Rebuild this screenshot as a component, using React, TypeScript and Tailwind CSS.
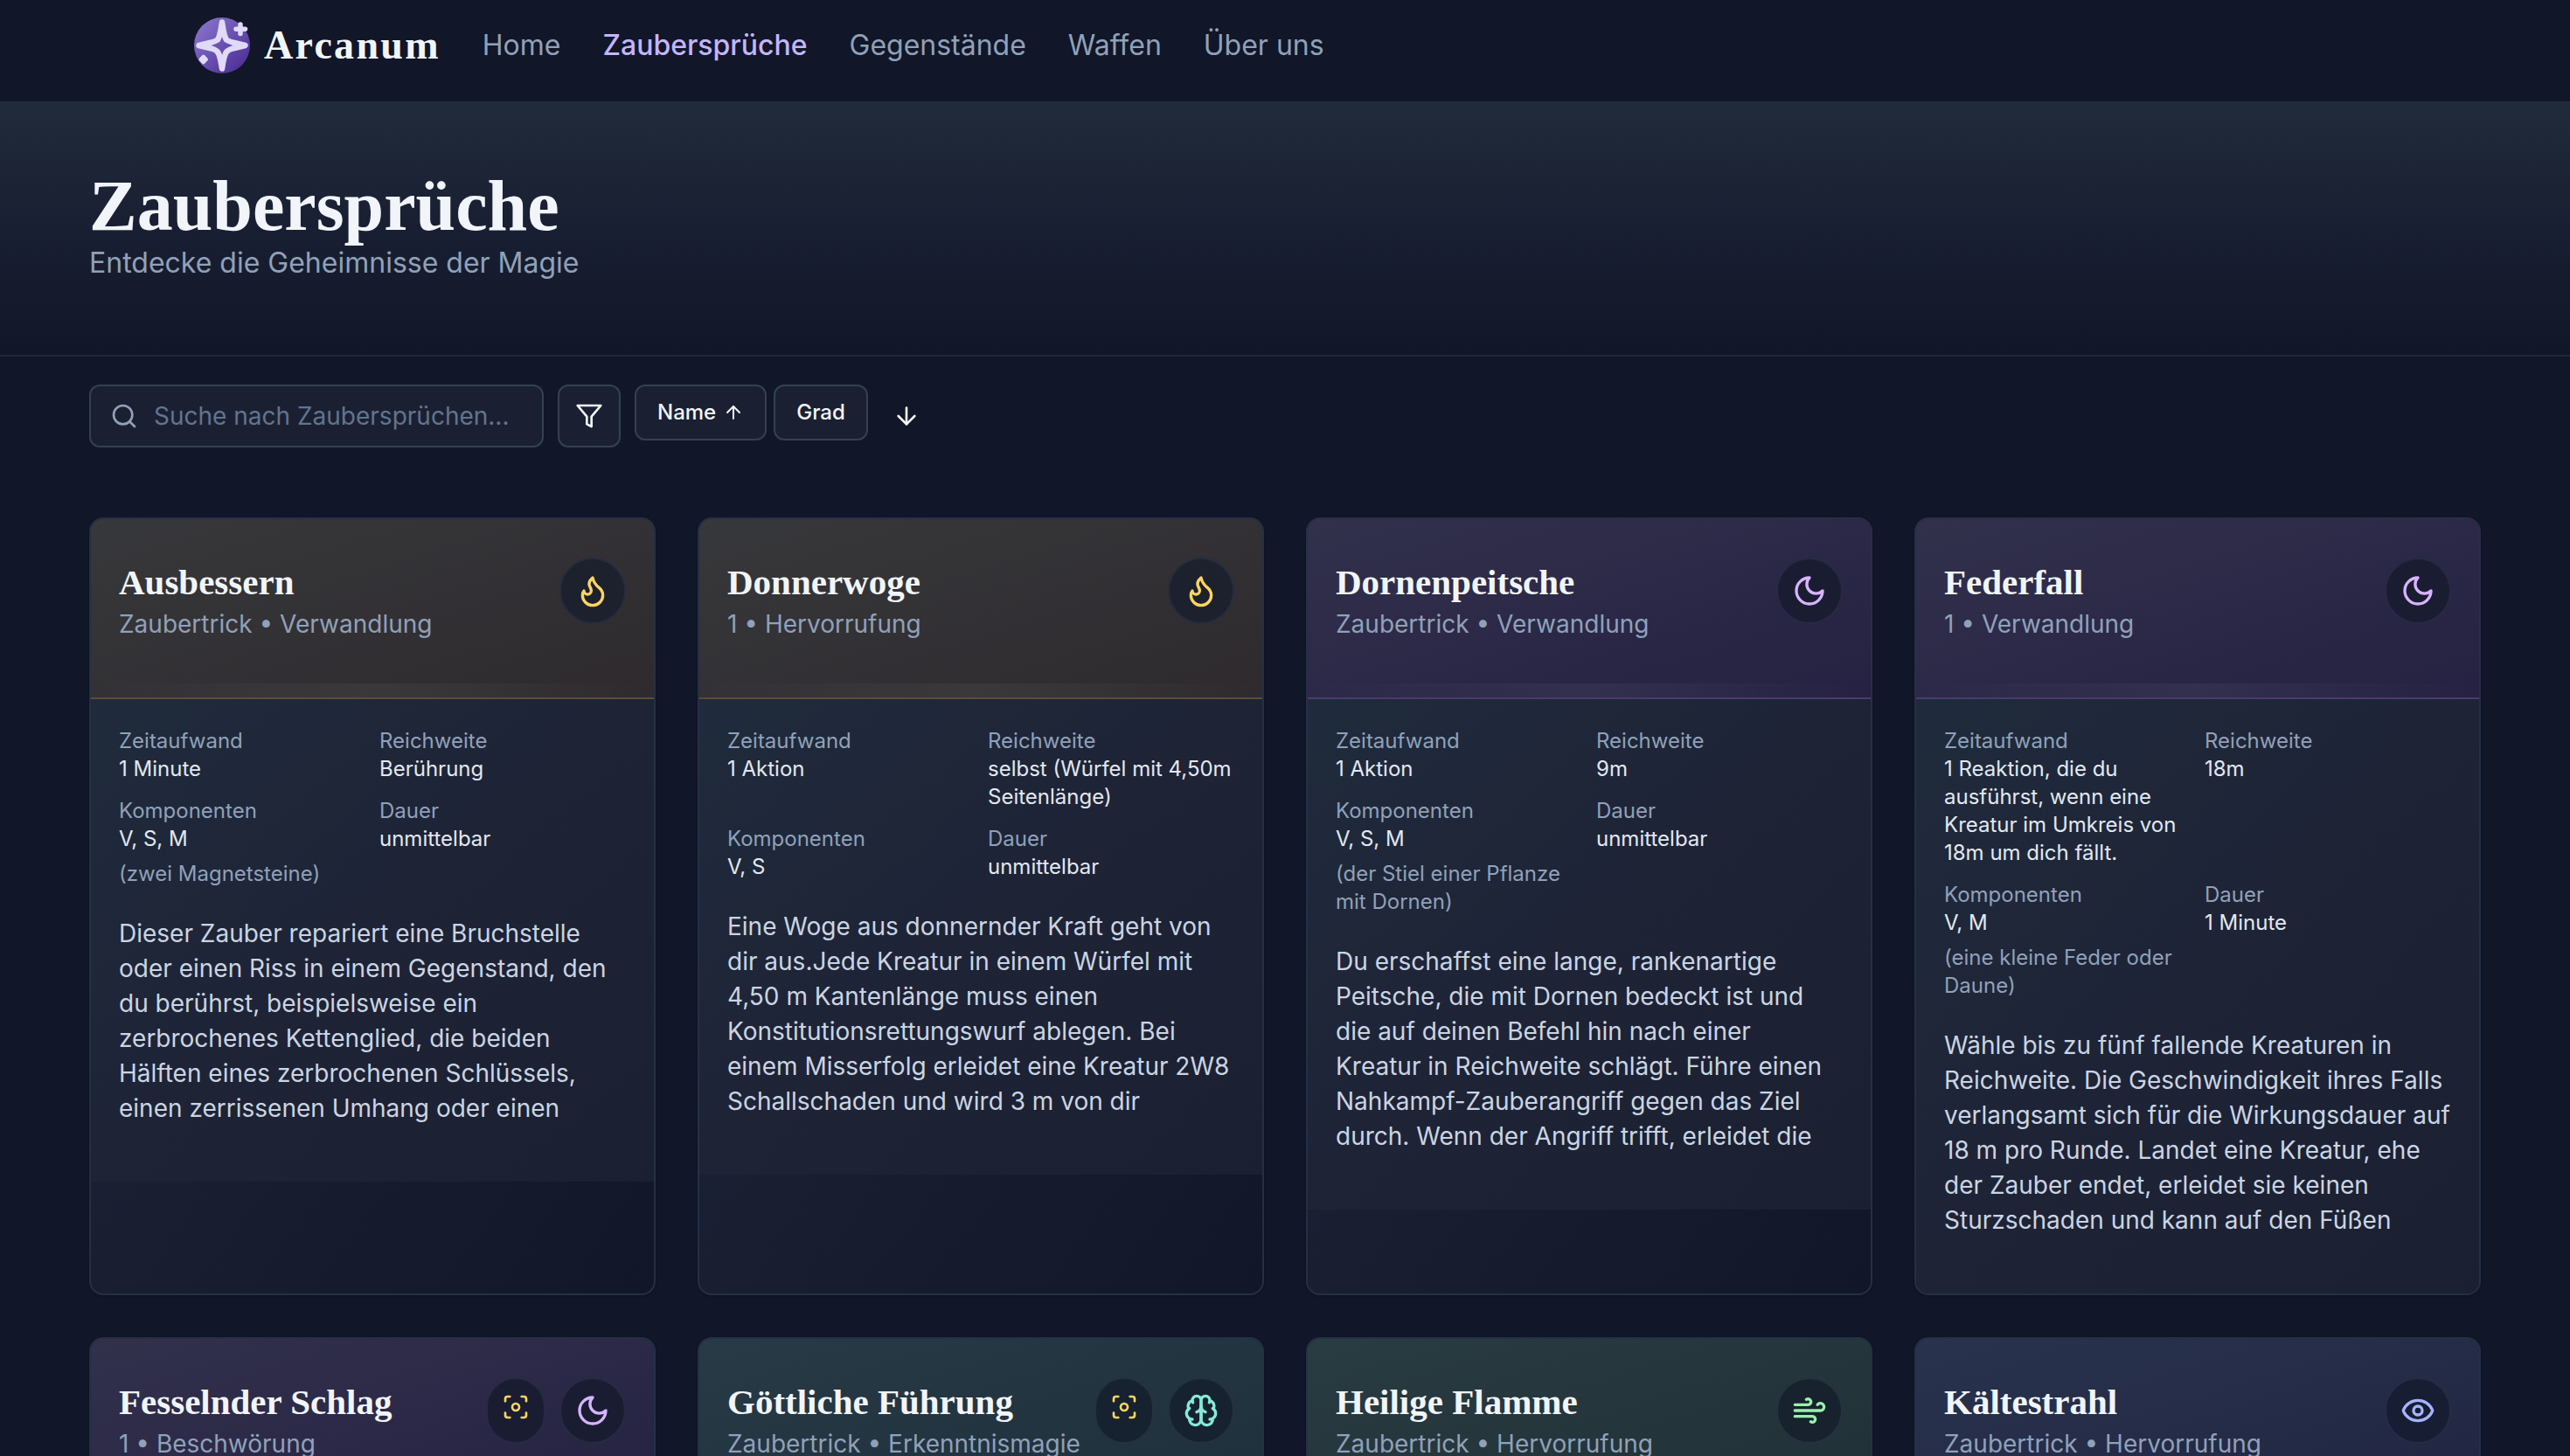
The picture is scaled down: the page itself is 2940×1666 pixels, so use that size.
import type { ReactNode } from "react";

const serif = "font-['Liberation_Serif',serif] font-bold text-slate-100";

function Glyph({ children, className }: { children: ReactNode; className: string }) {
  return (
    <svg
      viewBox="0 0 24 24"
      fill="none"
      stroke="currentColor"
      strokeWidth={2}
      strokeLinecap="round"
      strokeLinejoin="round"
      aria-hidden="true"
      className={"shrink-0 " + className}
    >
      {children}
    </svg>
  );
}

const glyphs = {
  flame: (
    <path d="M8.5 14.5A2.5 2.5 0 0 0 11 12c0-1.38-.5-2-1-3-1.072-2.143-.224-4.054 2-6 .5 2.5 2 4.9 4 6.5 2 1.6 3 3.5 3 5.5a7 7 0 1 1-14 0c0-1.153.433-2.294 1-3a2.5 2.5 0 0 0 2.5 2.5z" />
  ),
  moon: <path d="M12 3a6 6 0 0 0 9 9 9 9 0 1 1-9-9Z" />,
  brain: (
    <>
      <path d="M12 5a3 3 0 1 0-5.997.125 4 4 0 0 0-2.526 5.77 4 4 0 0 0 .556 6.588A4 4 0 1 0 12 18Z" />
      <path d="M12 5a3 3 0 1 1 5.997.125 4 4 0 0 1 2.526 5.77 4 4 0 0 1-.556 6.588A4 4 0 1 1 12 18Z" />
      <path d="M15 13a4.5 4.5 0 0 1-3-4 4.5 4.5 0 0 1-3 4" />
      <path d="M17.599 6.5a3 3 0 0 0 .399-1.375" />
      <path d="M6.003 5.125A3 3 0 0 0 6.401 6.5" />
      <path d="M3.477 10.896a4 4 0 0 1 .585-.396" />
      <path d="M19.938 10.5a4 4 0 0 1 .585.396" />
      <path d="M6 18a4 4 0 0 1-1.967-.516" />
      <path d="M19.967 17.484A4 4 0 0 1 18 18" />
    </>
  ),
  wind: (
    <>
      <path d="M12.8 19.6A2 2 0 1 0 14 16H2" />
      <path d="M17.5 8a2.5 2.5 0 1 1 2 4H2" />
      <path d="M9.8 4.4A2 2 0 1 1 11 8H2" />
    </>
  ),
  eye: (
    <>
      <path d="M2.062 12.348a1 1 0 0 1 0-.696 10.75 10.75 0 0 1 19.876 0 1 1 0 0 1 0 .696 10.75 10.75 0 0 1-19.876 0" />
      <circle cx="12" cy="12" r="3" />
    </>
  ),
  focus: (
    <>
      <circle cx="12" cy="12" r="3" />
      <path d="M3 7V5a2 2 0 0 1 2-2h2" />
      <path d="M17 3h2a2 2 0 0 1 2 2v2" />
      <path d="M21 17v2a2 2 0 0 1-2 2h-2" />
      <path d="M7 21H5a2 2 0 0 1-2-2v-2" />
    </>
  ),
  search: (
    <>
      <circle cx="11" cy="11" r="8" />
      <path d="m21 21-4.3-4.3" />
    </>
  ),
  filter: <polygon points="22 3 2 3 10 12.46 10 19 14 21 14 12.46 22 3" />,
  up: (
    <>
      <path d="m5 12 7-7 7 7" />
      <path d="M12 19V5" />
    </>
  ),
  down: (
    <>
      <path d="M12 5v14" />
      <path d="m19 12-7 7-7-7" />
    </>
  ),
};

const themes = {
  amber: {
    header: "from-[#37383b] to-[#2e2a2e] border-[#5c4e34]",
    badge: "bg-[#1c212d] border-[#242d40]",
    icon: "text-[#fcd55f]",
  },
  purple: {
    header: "from-[#32314c] to-[#252142] border-[#4a3b6c]",
    badge: "bg-[#1a1d32] border-[#262b42]",
    icon: "text-[#d8b4fe]",
  },
  teal: {
    header: "from-[#283a46] to-[#1e2f3c] border-[#2a5a60]",
    badge: "bg-[#172230] border-[#253141]",
    icon: "text-[#86ead6]",
  },
  green: {
    header: "from-[#293c42] to-[#202f36] border-[#2d5a48]",
    badge: "bg-[#18222e] border-[#25323f]",
    icon: "text-[#98f0ae]",
  },
  indigo: {
    header: "from-[#29334d] to-[#202542] border-[#3b4378]",
    badge: "bg-[#171d32] border-[#252d44]",
    icon: "text-[#a5b4fc]",
  },
};

type Spell = {
  name: string;
  meta: string;
  theme: keyof typeof themes;
  glyph: keyof typeof glyphs;
  concentration?: boolean;
  details?: {
    time: string;
    range: string;
    components: string;
    material?: string;
    duration: string;
    text: string;
  };
};

const spells: Spell[] = [
  {
    name: "Ausbessern",
    meta: "Zaubertrick • Verwandlung",
    theme: "amber",
    glyph: "flame",
    details: {
      time: "1 Minute",
      range: "Berührung",
      components: "V, S, M",
      material: "(zwei Magnetsteine)",
      duration: "unmittelbar",
      text: "Dieser Zauber repariert eine Bruchstelle oder einen Riss in einem Gegenstand, den du berührst, beispielsweise ein zerbrochenes Kettenglied, die beiden Hälften eines zerbrochenen Schlüssels, einen zerrissenen Umhang oder einen",
    },
  },
  {
    name: "Donnerwoge",
    meta: "1 • Hervorrufung",
    theme: "amber",
    glyph: "flame",
    details: {
      time: "1 Aktion",
      range: "selbst (Würfel mit 4,50m Seitenlänge)",
      components: "V, S",
      duration: "unmittelbar",
      text: "Eine Woge aus donnernder Kraft geht von dir aus.Jede Kreatur in einem Würfel mit 4,50 m Kantenlänge muss einen Konstitutionsrettungswurf ablegen. Bei einem Misserfolg erleidet eine Kreatur 2W8 Schallschaden und wird 3 m von dir",
    },
  },
  {
    name: "Dornenpeitsche",
    meta: "Zaubertrick • Verwandlung",
    theme: "purple",
    glyph: "moon",
    details: {
      time: "1 Aktion",
      range: "9m",
      components: "V, S, M",
      material: "(der Stiel einer Pflanze mit Dornen)",
      duration: "unmittelbar",
      text: "Du erschaffst eine lange, rankenartige Peitsche, die mit Dornen bedeckt ist und die auf deinen Befehl hin nach einer Kreatur in Reichweite schlägt. Führe einen Nahkampf-Zauberangriff gegen das Ziel durch. Wenn der Angriff trifft, erleidet die",
    },
  },
  {
    name: "Federfall",
    meta: "1 • Verwandlung",
    theme: "purple",
    glyph: "moon",
    details: {
      time: "1 Reaktion, die du ausführst, wenn eine Kreatur im Umkreis von 18m um dich fällt.",
      range: "18m",
      components: "V, M",
      material: "(eine kleine Feder oder Daune)",
      duration: "1 Minute",
      text: "Wähle bis zu fünf fallende Kreaturen in Reichweite. Die Geschwindigkeit ihres Falls verlangsamt sich für die Wirkungsdauer auf 18 m pro Runde. Landet eine Kreatur, ehe der Zauber endet, erleidet sie keinen Sturzschaden und kann auf den Füßen",
    },
  },
  { name: "Fesselnder Schlag", meta: "1 • Beschwörung", theme: "purple", glyph: "moon", concentration: true },
  { name: "Göttliche Führung", meta: "Zaubertrick • Erkenntnismagie", theme: "teal", glyph: "brain", concentration: true },
  { name: "Heilige Flamme", meta: "Zaubertrick • Hervorrufung", theme: "green", glyph: "wind" },
  { name: "Kältestrahl", meta: "Zaubertrick • Hervorrufung", theme: "indigo", glyph: "eye" },
];

const links = ["Home", "Zaubersprüche", "Gegenstände", "Waffen", "Über uns"];

function Logo() {
  return (
    <svg viewBox="0 0 64 64" className="size-16 shrink-0" aria-hidden="true">
      <defs>
        <linearGradient id="orb" x1="0" y1="0" x2="1" y2="1">
          <stop offset="0" stopColor="#8f7ad2" />
          <stop offset="1" stopColor="#45278f" />
        </linearGradient>
      </defs>
      <circle cx="32" cy="32" r="32" fill="url(#orb)" />
      <g stroke="#e0daf6" strokeLinecap="round" strokeLinejoin="round">
        <path
          fill="none"
          strokeWidth="6.5"
          d="M32 5.5C33.5 16 34.5 22 37 25.5Q39 27 44 28.5L58.500 32L44 35.500Q39 37 37 39.500C34.500 43 33.500 48 32 58.500C30.500 48 29.500 43 27 39.500Q25 37 20 35.500L5.500 32L20 28.500Q25 27 27 25.500C29.500 22 30.500 16 32 5.500Z"
        />
        <path strokeWidth="5.5" fill="none" d="M53 8V18.500M48 13.300H58.500" />
        <path strokeWidth="4" fill="#e0daf6" d="M10.700 44.500L14 48L10.700 51.500L7.400 48Z" />
      </g>
    </svg>
  );
}

function Field({ label, value, note }: { label: string; value: string; note?: string }) {
  return (
    <div>
      <dt className="text-slate-400">{label}</dt>
      <dd className="text-slate-200">{value}</dd>
      {note && <dd className="mt-2 text-slate-400">{note}</dd>}
    </div>
  );
}

function SpellCard({ spell }: { spell: Spell }) {
  const theme = themes[spell.theme];
  const d = spell.details;
  return (
    <article className="overflow-hidden rounded-2xl border-2 border-[#253044] bg-linear-to-br from-[#1e293b] via-[#191e31] to-[#111628] shadow-sm">
      <header className={"relative border-b-2 bg-linear-to-br px-8 pt-11 pb-16 " + theme.header}>
        <div className="flex justify-between gap-4">
          <div className="min-w-0">
            <h2 className={"text-[41px] leading-[56px] whitespace-nowrap " + serif}>{spell.name}</h2>
            <p className="text-[28px] leading-10 whitespace-nowrap text-slate-400">{spell.meta}</p>
          </div>
          <div className="flex h-[76px] shrink-0 gap-4">
            {spell.concentration && (
              <span className={"rounded-full border-2 p-4 text-[#fcd55f] " + theme.badge}>
                <Glyph className="size-8">{glyphs.focus}</Glyph>
              </span>
            )}
            <span className={"rounded-full border-2 p-4 " + theme.badge + " " + theme.icon}>
              <Glyph className="size-10">{glyphs[spell.glyph]}</Glyph>
            </span>
          </div>
        </div>
        <div className="absolute inset-x-0 bottom-0 h-4 bg-linear-to-r from-transparent via-white/5 to-transparent" />
      </header>
      {d && (
        <div className="bg-linear-to-br from-[#1f2b3c] via-[#1e2336] to-[#1a2031] px-8 pt-8 pb-16">
          <dl className="grid grid-cols-2 gap-4 text-2xl leading-8">
            <Field label="Zeitaufwand" value={d.time} />
            <Field label="Reichweite" value={d.range} />
            <Field label="Komponenten" value={d.components} note={d.material} />
            <Field label="Dauer" value={d.duration} />
          </dl>
          <p className="mt-8 text-[28px] leading-10 text-slate-300">{d.text}</p>
        </div>
      )}
    </article>
  );
}

const control = "rounded-xl border-2 border-[#334152] bg-[#1a2032]";

export default function App() {
  return (
    <div className="h-screen overflow-hidden bg-[#111628] font-['Inter',sans-serif] text-slate-100">
      <header className="pt-5 pb-8">
        <div className="mx-auto flex max-w-[2560px] items-center gap-12 px-8">
          <a href="#home" className="flex items-center gap-4">
            <Logo />
            <span className={"text-[46px] leading-[56px] tracking-wider " + serif}>Arcanum</span>
          </a>
          <nav className="flex gap-12 text-[32px] leading-[60px]">
            {links.map((link, i) => (
              <a
                key={link}
                href={"#" + link}
                className={i === 1 ? "font-medium text-[#c4b5fd]" : "text-slate-400"}
              >
                {link}
              </a>
            ))}
          </nav>
        </div>
      </header>

      <section className="border-b-2 border-[#1f2738] bg-linear-to-b from-[#202b3b] via-[#191f32] to-[#111628] py-20">
        <div className="mx-auto max-w-[2800px] px-8">
          <h1 className={"text-[82px] leading-[80px] " + serif}>Zaubersprüche</h1>
          <p className="text-[32px] leading-[50px] text-slate-400">Entdecke die Geheimnisse der Magie</p>
        </div>
      </section>

      <main className="mx-auto max-w-[2800px] px-8 pt-8">
        <div className="flex items-start gap-4">
          <label className={"flex h-[72px] w-[520px] items-center gap-[18px] px-[22px] " + control}>
            <Glyph className="size-8 text-slate-400">{glyphs.search}</Glyph>
            <input
              type="text"
              aria-label="Suche nach Zaubersprüchen"
              placeholder="Suche nach Zaubersprüchen..."
              className="min-w-0 flex-1 bg-transparent text-[28px] leading-10 outline-none placeholder:text-slate-500"
            />
          </label>
          <button type="button" aria-label="Filter" className={"flex size-[72px] items-center justify-center " + control}>
            <Glyph className="size-8">{glyphs.filter}</Glyph>
          </button>
          <div className="flex gap-2">
            <button type="button" className={"flex h-16 items-center gap-2 px-6 text-2xl font-medium " + control}>
              Name
              <Glyph className="size-6">{glyphs.up}</Glyph>
            </button>
            <button type="button" className={"flex h-16 items-center px-6 text-2xl font-medium " + control}>
              Grad
            </button>
            <button type="button" aria-label="Absteigend sortieren" className="flex size-[72px] items-center justify-center">
              <Glyph className="size-8">{glyphs.down}</Glyph>
            </button>
          </div>
        </div>

        <div className="mt-20 grid grid-cols-4 gap-12">
          {spells.map((spell) => (
            <SpellCard key={spell.name} spell={spell} />
          ))}
        </div>
      </main>
    </div>
  );
}
